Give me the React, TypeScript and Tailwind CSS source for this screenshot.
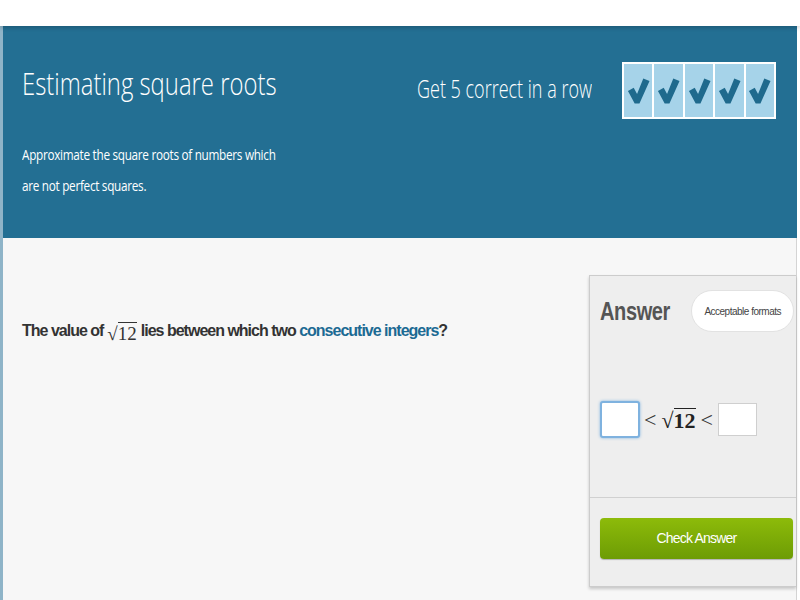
import React from 'react';

const Check = () => (
  <svg viewBox="0 0 24 30" className="w-[23px] h-[30px]">
    <path d="M1 15 L7 11.5 L10.5 18 L17 2 L23.5 4.5 L13 28 L8 28 Z" fill="#1f6a8d" />
  </svg>
);

const Sqrt12 = ({ className = '' }: { className?: string }) => (
  <span className={`inline-flex items-end font-['Liberation_Serif',serif] ${className}`}>
    <span className="leading-none">√</span>
    <span className="border-t border-current leading-none pt-[1px]">12</span>
  </span>
);

export default function App() {
  return (
    <div className="w-[800px] h-[600px] bg-white overflow-hidden font-['Liberation_Sans',sans-serif]">
      <div className="h-[26px] bg-white shadow-[0_2px_4px_rgba(0,0,0,0.18)] relative z-10" />
      <div className="w-[797px] border-l-[3px] border-[#8fb4c8]">
        <header className="h-[212px] bg-[#236f93] text-white flex">
          <div className="flex-1 min-w-0 pl-[19px] pt-[37px]">
            <h1 className="font-['Open_Sans',sans-serif] font-light text-[31px] leading-[40px] inline-block origin-left scale-x-[0.77] whitespace-nowrap">
              Estimating square roots
            </h1>
            <p className="mt-[36px] font-['Open_Sans',sans-serif] text-[14px] leading-[31px] origin-left scale-x-[0.84] tracking-tight whitespace-nowrap">
              Approximate the square roots of numbers which<br />are not perfect squares.
            </p>
          </div>
          <div className="flex items-start shrink-0 pt-[36px] pr-[21px]">
            <div className="w-[174px] mt-[10px] whitespace-nowrap">
              <span className="font-['Open_Sans',sans-serif] font-light text-[25px] leading-[32px] inline-block origin-left scale-x-[0.72]">
                Get 5 correct in a row
              </span>
            </div>
            <div className="ml-[31px] bg-white p-[2px] flex gap-[2px]">
              {[0, 1, 2, 3, 4].map(i => (
                <div key={i} className="w-[28.4px] h-[53px] bg-[#a6d3e9] flex items-center justify-center">
                  <Check />
                </div>
              ))}
            </div>
          </div>
        </header>
        <main className="h-[362px] bg-[#f7f7f7] border-r border-[#d4d4d4] flex">
          <div className="flex-1 min-w-0 pl-[19px] pt-[81px]">
            <p className="text-[16px] font-bold text-[#333] tracking-[-1px] whitespace-nowrap flex items-end gap-[4px]">
              <span>The value of</span>
              <Sqrt12 className="font-normal text-[19px] tracking-normal" />
              <span>lies between which two <span className="text-[#1c6a93]">consecutive integers</span>?</span>
            </p>
          </div>
          <aside className="w-[207px] shrink-0 mt-[37px] h-[312px] bg-[#eeeeee] border border-[#cccccc] border-r-0 shadow-[0_2px_3px_rgba(0,0,0,0.2)] flex flex-col">
            <div className="flex-1 pl-[10px] pr-[2px] pt-[14px]">
              <div className="flex items-center justify-between">
                <div className="w-[70px]">
                  <span className="text-[26px] font-bold text-[#555] tracking-[-0.5px] inline-block origin-left scale-x-[0.77]">Answer</span>
                </div>
                <span className="h-[42px] px-[12px] rounded-full bg-white border border-[#e2e2e2] flex items-center text-[10px] text-[#444] tracking-[-0.5px]">
                  Acceptable formats
                </span>
              </div>
              <div className="mt-[69px] flex items-center">
                <div className="w-[40px] h-[37px] bg-white border-2 border-[#7fb2df] rounded-[3px] shadow-[0_0_3px_#7fb2df]" />
                <span className="ml-[4px] text-[22px] font-['Liberation_Serif',serif] text-[#333]">&lt;</span>
                <Sqrt12 className="ml-[5px] text-[22px] text-[#222] font-bold" />
                <span className="ml-[5px] text-[22px] font-['Liberation_Serif',serif] text-[#333]">&lt;</span>
                <div className="ml-[5px] w-[39px] h-[33px] bg-white border border-[#cfcfcf]" />
              </div>
            </div>
            <div className="h-[89px] border-t border-[#d0d0d0] pl-[10px] pt-[20px]">
              <button className="w-[193px] h-[41px] rounded-[4px] bg-gradient-to-b from-[#8dbb0a] to-[#6d9c05] text-white text-[14px] tracking-[-0.8px] shadow-[0_1px_1px_rgba(0,0,0,0.25)]">
                Check Answer
              </button>
            </div>
          </aside>
        </main>
      </div>
    </div>
  );
}
